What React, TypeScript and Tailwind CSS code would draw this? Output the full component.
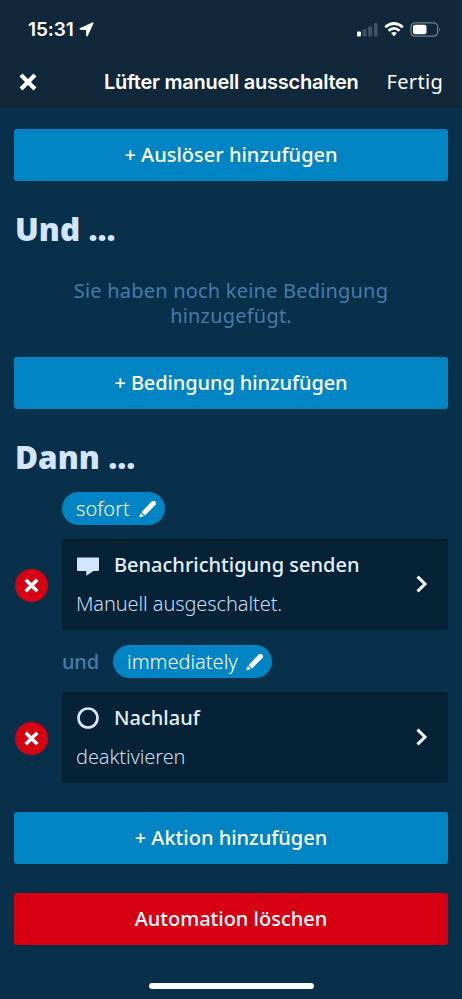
import React from 'react';
import clsx from 'clsx';

interface ActionButtonProps {
  label: string;
  danger?: boolean;
  className?: string;
  textClassName?: string;
}

const ActionButton: React.FC<ActionButtonProps> = ({ label, danger, className, textClassName }) => (
  <button
    className={clsx(
      'flex h-[52px] w-full shrink-0 items-center justify-center rounded-[3px] text-[20px] font-medium text-white',
      danger ? 'bg-[#d60012]' : 'bg-[#0084c3]',
      className
    )}
  >
    <span className={clsx('whitespace-nowrap', textClassName)}>{label}</span>
  </button>
);

const PencilIcon = () => (
  <svg width="18" height="18" viewBox="0 0 18 18" fill="#fff">
    <path d="M12.9 1.3 Q14.3 .1 15.7 1.1 L16.7 2.2 Q17.7 3.6 16.6 4.8 L6 15.4 L2.6 12 Z" />
    <path d="M1.9 12.9 L5 16 L.8 17.3 Q.1 17.2 .3 16.6 Z" />
  </svg>
);

const CrossIcon = ({ size }: { size: number }) => (
  <svg width={size} height={size} viewBox="0 0 18 18" stroke="#fff" strokeWidth="4.2">
    <path d="M2 2 L16 16 M16 2 L2 16" />
  </svg>
);

const ChevronIcon = () => (
  <svg width="12" height="18" viewBox="0 0 12 18" fill="none" stroke="#f0f6ff" strokeWidth="3" className="mb-[3px]">
    <path d="M1.5 1.6 L9 9 L1.5 16.4" />
  </svg>
);

const MessageIcon = () => (
  <svg width="22" height="19" viewBox="0 0 22 19" fill="#d3e5ff" className="ml-px mt-[2px]">
    <path d="M1 .5 H21 Q22 .5 22 1.5 V13 Q22 14 21 14 H16.5 L9.3 18.8 V14 H1 Q0 14 0 13 V1.5 Q0 .5 1 .5 Z" />
  </svg>
);

const CircleIcon = () => (
  <svg width="22" height="22" viewBox="0 0 22 22" fill="none" stroke="#d9e8ff" strokeWidth="2.6" className="ml-px">
    <circle cx="11" cy="11" r="9.5" />
  </svg>
);

const StatusBar = () => (
  <div className="flex h-[58px] items-center justify-between pl-[28px] pr-[21px] pt-px text-white">
    <div className="flex items-center gap-[4px]">
      <span className="w-[47px] pt-px font-[Inter] text-[19px] font-semibold tracking-[-0.1px]">15:31</span>
      <svg width="15" height="15" viewBox="0 0 15 15" fill="#fff" stroke="#fff" strokeWidth="1.6" strokeLinejoin="round">
        <path d="M13.7 1.2 L8 13.6 L7.7 7.3 L1.2 6.9 Z" />
      </svg>
    </div>
    <div className="flex items-center gap-[6px]">
      <svg width="21" height="15" viewBox="0 0 21 15">
        <rect x="0" y="9.5" width="4" height="5" rx="1" fill="#fff" />
        <rect x="5.6" y="7.2" width="3.8" height="7.3" rx="1" fill="#405364" />
        <rect x="11.2" y="4.2" width="3.8" height="10.3" rx="1" fill="#405364" />
        <rect x="16.8" y="1" width="3.8" height="13.5" rx="1" fill="#405364" />
      </svg>
      <svg width="20" height="15" viewBox="0 0 20 15" fill="none" stroke="#fff" strokeWidth="2.7">
        <path d="M1.2 5.2 Q10 -2.2 18.8 5.2" />
        <path d="M4.5 8.7 Q10 3.9 15.5 8.7" />
        <path d="M7 11 Q10 8.9 13 11 L10 14.2 Z" fill="#fff" stroke="none" />
      </svg>
      <svg width="31" height="15" viewBox="0 0 31 15">
        <rect x="1" y=".8" width="26.6" height="13.4" rx="4" fill="none" stroke="#75828e" strokeWidth="1.2" />
        <rect x="3" y="2.8" width="13.5" height="9.4" rx="2" fill="#fff" />
        <path d="M29 5.2 Q30.6 7.5 29 9.8 Z" fill="#75828e" />
      </svg>
    </div>
  </div>
);

interface DelayPillProps {
  label: string;
  className: string;
}

const DelayPill: React.FC<DelayPillProps> = ({ label, className }) => (
  <div className={clsx('flex h-[33px] items-center justify-between rounded-full bg-[#0084c3] pl-[14px] pr-[8px]', className)}>
    <span className="whitespace-nowrap text-[20px] font-light leading-[33px] text-white">{label}</span>
    <PencilIcon />
  </div>
);

interface ActionRowProps {
  icon: React.ReactNode;
  title: string;
  detail: string;
}

const ActionRow: React.FC<ActionRowProps> = ({ icon, title, detail }) => (
  <div className="flex h-[91px] items-center gap-[14px] pl-px">
    <button className="mt-px flex h-[33px] w-[33px] shrink-0 items-center justify-center rounded-full bg-[#d60012]">
      <CrossIcon size={15} />
    </button>
    <div className="flex h-full flex-1 items-center justify-between rounded-[3px] border-t-2 border-[#051c2b] bg-[#062236] pl-[14px] pr-[20px]">
      <div className="flex h-full flex-col">
        <div className="mt-[10px] flex h-[28px] items-center">
          <span className="flex w-[38px] shrink-0 items-center">{icon}</span>
          <span className="whitespace-nowrap text-[20px] font-medium text-[#e4efff]">{title}</span>
        </div>
        <span className="mt-[12px] self-start whitespace-nowrap text-[20px] font-light leading-[26px] tracking-[-0.1px] text-[#c8dcf5]">
          {detail}
        </span>
      </div>
      <ChevronIcon />
    </div>
  </div>
);

const App: React.FC = () => {
  return (
    <div className="flex h-[999px] w-[462px] flex-col overflow-hidden bg-[#08304b] font-['Noto_Sans',sans-serif]">
      <header className="h-[108px] shrink-0 bg-[#11273a]">
        <StatusBar />
        <div className="flex h-[48px] items-center px-[19px] text-white">
          <CrossIcon size={18} />
          <h1 className="ml-[67px] w-[256px] whitespace-nowrap font-[Inter] text-[20px] font-semibold leading-[26px] tracking-[-0.25px]">
            Lüfter manuell ausschalten
          </h1>
          <button className="ml-auto text-[20px] font-normal tracking-[0.3px]">Fertig</button>
        </div>
      </header>

      <main className="flex flex-1 flex-col px-[14px] pt-[21px]">
        <ActionButton label="+ Auslöser hinzufügen" />

        <h2 className="mt-[25px] h-[46px] pl-px text-[31.5px] font-black leading-[46px] text-[#d3e5ff]">Und ...</h2>
        <p className="mt-[26px] text-center text-[20px] font-normal leading-[25px] tracking-[0.2px] text-[#4a7aa8]">
          Sie haben noch keine Bedingung
          <br />
          hinzugefügt.
        </p>

        <ActionButton label="+ Bedingung hinzufügen" className="mt-[29px]" textClassName="tracking-[-0.1px]" />

        <h2 className="mt-[25px] h-[46px] pl-px text-[31.5px] font-black leading-[46px] text-[#d3e5ff]">Dann ...</h2>
        <div className="mb-[14px] ml-[48px] mt-[12px] flex">
          <DelayPill label="sofort" className="w-[103px]" />
        </div>

        <ActionRow icon={<MessageIcon />} title="Benachrichtigung senden" detail="Manuell ausgeschaltet." />

        <div className="mb-[14px] ml-[48px] mt-[15px] flex items-center">
          <span className="w-[51px] text-[20px] font-medium leading-[33px] tracking-[-0.2px] text-[#4a7aa8]">und</span>
          <DelayPill label="immediately" className="w-[159px]" />
        </div>

        <ActionRow icon={<CircleIcon />} title="Nachlauf" detail="deaktivieren" />

        <ActionButton label="+ Aktion hinzufügen" className="mt-[29px]" />
        <ActionButton label="Automation löschen" danger className="mt-[29px]" />

        <div className="mx-auto mb-[10px] mt-auto h-[6px] w-[165px] rounded-full bg-white" />
      </main>
    </div>
  );
};

export default App;
